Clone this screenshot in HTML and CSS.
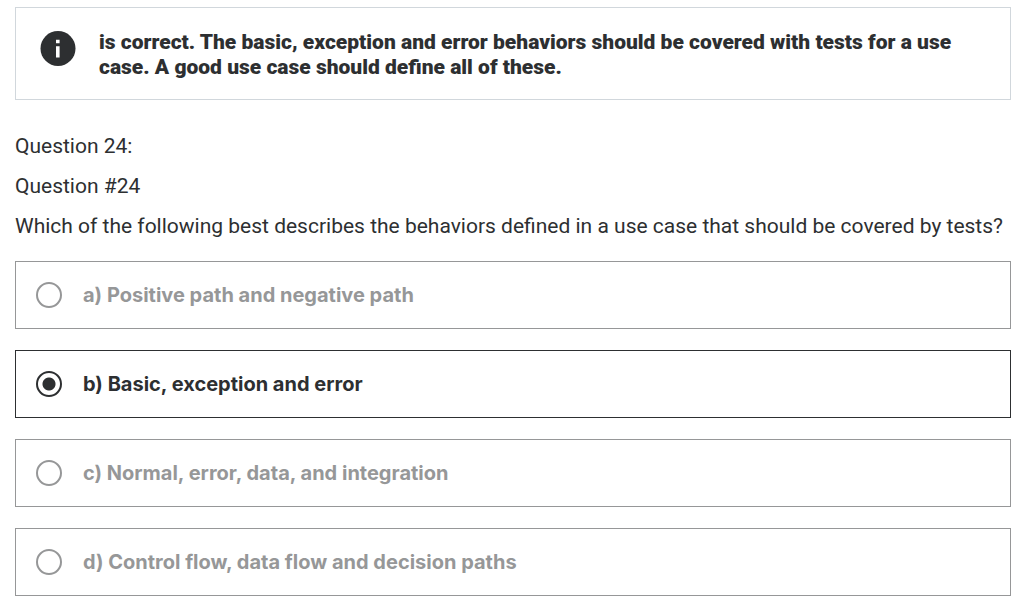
FILE: index.html
```html
<!DOCTYPE html>
<html lang="en">
<head>
<meta charset="utf-8">
<title>Question 24</title>
<link rel="stylesheet" href="styles.css">
</head>
<body>
<main class="quiz">
  <section class="notice">
    <svg class="notice-icon" viewBox="0 0 36 36" aria-hidden="true">
      <circle cx="18" cy="18.5" r="17.5" fill="#2d2f31"/>
      <path d="M16 9.8h3.6v3.5H16zM16 16.3h3.6v11.2H16z" fill="#fff"/>
    </svg>
    <p class="notice-text">is correct. The basic, exception and error behaviors should be covered with tests for a use case. A good use case should define all of these.</p>
  </section>
  <div class="prompt">
    <p>Question 24:</p>
    <p>Question #24</p>
    <p id="question">Which of the following best describes the behaviors defined in a use case that should be covered by tests?</p>
  </div>
  <div class="options" role="radiogroup" aria-labelledby="question">
    <label class="option"><input class="radio" type="radio" name="answer"><span>a) Positive path and negative path</span></label>
    <label class="option option-selected"><input class="radio" type="radio" name="answer" checked><span>b) Basic, exception and error</span></label>
    <label class="option"><input class="radio" type="radio" name="answer"><span>c) Normal, error, data, and integration</span></label>
    <label class="option"><input class="radio" type="radio" name="answer"><span>d) Control flow, data flow and decision paths</span></label>
  </div>
</main>
</body>
</html>
```
FILE: styles.css
```css
* { box-sizing: border-box; }
body {
  margin: 0;
  background: #fff;
  color: #2d2f31;
  font-family: Roboto, "Liberation Sans", sans-serif;
  font-size: 21px;
  line-height: 25px;
}
p { margin: 0; }
.quiz { padding: 7px 23px 19px 15px; }
.notice {
  display: flex;
  gap: 23px;
  padding: 22px 24px 19px;
  border: 1px solid #d1d7dc;
}
.notice-icon { flex: none; width: 36px; height: 36px; }
.notice-text { font-weight: 900; }
.prompt {
  display: grid;
  gap: 15px;
  padding: 34px 0 22px;
}
.options { display: grid; gap: 21px; }
.option {
  display: flex;
  align-items: center;
  gap: 21px;
  min-height: 68px;
  padding: 0 20px;
  border: 1px solid #969798;
  color: #969798;
  font-family: Inter, "Liberation Sans", sans-serif;
  font-size: 20px;
  font-weight: 700;
}
.option-selected { border-color: #2d2f31; color: #2d2f31; }
.radio {
  appearance: none;
  flex: none;
  width: 26px;
  height: 26px;
  margin: 0;
  border: 2px solid currentColor;
  border-radius: 50%;
  color: inherit;
}
.radio:checked { background: radial-gradient(circle, currentColor 6px, transparent 7px); }
```
